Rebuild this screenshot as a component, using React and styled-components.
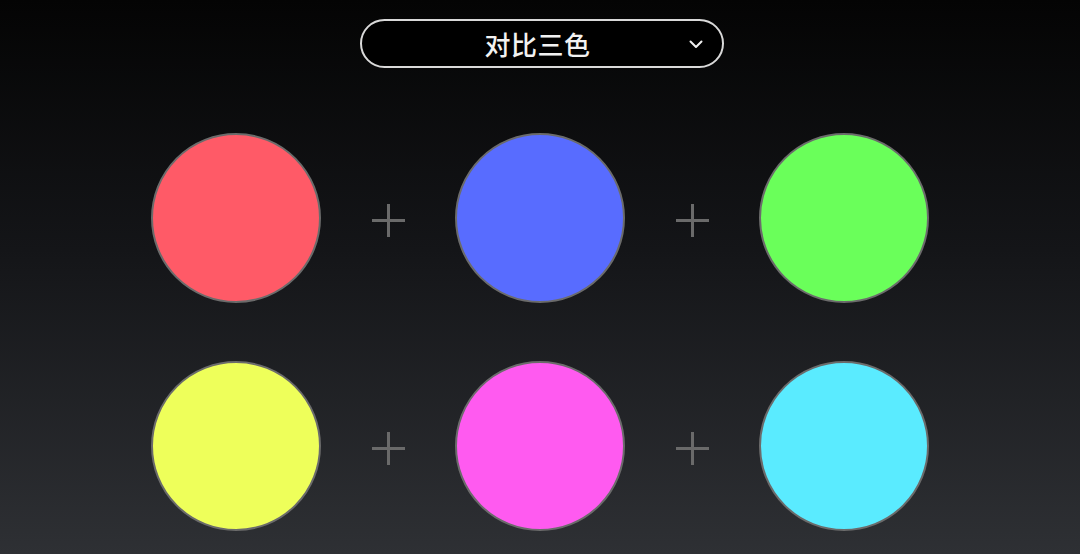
import React from "react"
import styled, { createGlobalStyle } from "styled-components"

const GlobalStyle = createGlobalStyle`
  html, body {
    margin: 0;
    padding: 0;
    height: 100%;
  }
  body {
    font-family: "Noto Sans CJK SC", "Noto Sans", sans-serif;
  }
`

const Screen = styled.div`
  width: 1080px;
  height: 554px;
  box-sizing: border-box;
  padding-top: 19px;
  background: linear-gradient(to bottom, #040404 0%, #141518 45%, #2e3034 100%);
  display: flex;
  flex-direction: column;
  align-items: center;
  overflow: hidden;
`

const Picker = styled.div`
  position: relative;
  width: 364px;
  height: 49px;
  margin-left: 4px;
  box-sizing: border-box;
  border: 2px solid #d9d9d9;
  border-radius: 25px;
  background: #000;
  display: flex;
  align-items: center;
  justify-content: center;
  color: #f2f2f2;
  font-size: 26px;
  font-weight: 500;
  letter-spacing: 0.5px;
  padding-right: 9px;
`

const Chevron = styled.svg`
  position: absolute;
  right: 19px;
  top: 50%;
  margin-top: -4px;
`

const Grid = styled.div`
  margin-top: 65px;
  display: grid;
  grid-template-columns: 170px 134px 170px 134px 170px;
  row-gap: 58px;
  align-items: center;
  justify-items: center;
`

const Swatch = styled.div`
  width: 170px;
  height: 170px;
  box-sizing: border-box;
  border-radius: 50%;
  border: 2px solid #6b6b6b;
  background: ${(p) => p.$color};
`

const Plus = styled.div`
  position: relative;
  width: 33px;
  height: 33px;
  margin-top: 4px;
  &::before,
  &::after {
    content: "";
    position: absolute;
    background: #6a6a6a;
  }
  &::before {
    left: 0;
    right: 0;
    top: 15px;
    height: 3px;
  }
  &::after {
    top: 0;
    bottom: 0;
    left: 15px;
    width: 3px;
  }
`

const rows = [
  ["#ff5a67", "#586cff", "#6aff5a"],
  ["#eeff5a", "#ff5af0", "#5aebff"],
]

export default function App() {
  return (
    <Screen>
      <GlobalStyle />
      <Picker>
        对比三色
        <Chevron width="14" height="9" viewBox="0 0 14 9">
          <path d="M1.5 1.5 L7 7 L12.5 1.5" fill="none" stroke="#f0f0f0" strokeWidth="2" strokeLinecap="round" strokeLinejoin="round" />
        </Chevron>
      </Picker>
      <Grid>
        {rows.map((row, r) =>
          row.map((c, i) => (
            <React.Fragment key={`${r}-${i}`}>
              <Swatch $color={c} />
              {i < row.length - 1 && <Plus />}
            </React.Fragment>
          ))
        )}
      </Grid>
    </Screen>
  )
}
